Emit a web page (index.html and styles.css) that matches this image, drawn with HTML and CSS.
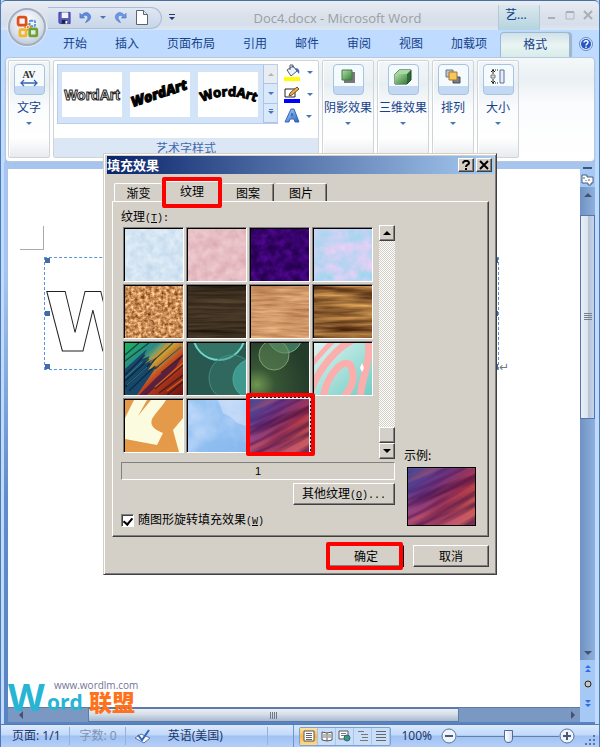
FILE: index.html
```html
<!DOCTYPE html>
<html lang="zh-CN">
<head>
<meta charset="utf-8">
<meta name="viewport" content="width=device-width">
<title>Doc4.docx - Microsoft Word</title>
<link rel="stylesheet" href="styles.css">
</head>
<body>
<svg class="defs" aria-hidden="true">
  <defs>
    <filter id="f-paper" x="0" y="0" width="1" height="1" color-interpolation-filters="sRGB"><feTurbulence type="fractalNoise" baseFrequency=".14" numOctaves="3" seed="3"/><feColorMatrix values="0 0 0 .2 .73  0 0 0 .13 .83  0 0 0 .06 .92  0 0 0 0 1"/></filter>
    <filter id="f-pink" x="0" y="0" width="1" height="1" color-interpolation-filters="sRGB"><feTurbulence type="fractalNoise" baseFrequency=".1" numOctaves="3" seed="8"/><feColorMatrix values="0 0 0 .12 .84  0 0 0 .2 .64  0 0 0 .18 .67  0 0 0 0 1"/></filter>
    <filter id="f-purple" x="0" y="0" width="1" height="1" color-interpolation-filters="sRGB"><feTurbulence type="fractalNoise" baseFrequency=".12" numOctaves="4" seed="5"/><feColorMatrix values="0 0 0 .3 .07  0 0 0 .06 -.02  0 0 0 .45 .2  0 0 0 0 1"/></filter>
    <filter id="f-bouquet" x="0" y="0" width="1" height="1" color-interpolation-filters="sRGB"><feTurbulence type="fractalNoise" baseFrequency=".07" numOctaves="4" seed="12"/><feColorMatrix values="0 0 0 .55 .5  0 0 0 -.05 .85  0 0 0 .06 .92  0 0 0 0 1"/></filter>
    <filter id="f-cork" x="0" y="0" width="1" height="1" color-interpolation-filters="sRGB"><feTurbulence type="fractalNoise" baseFrequency=".3" numOctaves="3" seed="2"/><feColorMatrix values="0 0 0 .9 .34  0 0 0 .9 .11  0 0 0 .8 -.05  0 0 0 0 1"/></filter>
    <filter id="f-walnut" x="0" y="0" width="1" height="1" color-interpolation-filters="sRGB"><feTurbulence type="fractalNoise" baseFrequency=".012 .25" numOctaves="4" seed="4"/><feColorMatrix values="0 0 0 .35 .07  0 0 0 .28 .05  0 0 0 .22 .02  0 0 0 0 1"/></filter>
    <filter id="f-oak" x="0" y="0" width="1" height="1" color-interpolation-filters="sRGB"><feTurbulence type="fractalNoise" baseFrequency=".03 .3" numOctaves="3" seed="9"/><feColorMatrix values="0 0 0 .35 .64  0 0 0 .38 .4  0 0 0 .35 .23  0 0 0 0 1"/></filter>
    <filter id="f-wood" x="0" y="0" width="1" height="1" color-interpolation-filters="sRGB"><feTurbulence type="fractalNoise" baseFrequency=".012 .16" numOctaves="4" seed="7"/><feColorMatrix values="0 0 0 1 .06  0 0 0 .85 -.05  0 0 0 .5 -.06  0 0 0 0 1"/></filter>
    <filter id="f-streak" x="0" y="0" width="1" height="1" color-interpolation-filters="sRGB"><feTurbulence type="fractalNoise" baseFrequency=".012 .13" numOctaves="3" seed="21"/><feColorMatrix values="0 0 0 0 .22  0 0 0 0 .03  0 0 0 0 .25  0 0 0 3 -1.25"/></filter>
    <filter id="f-glow" x="0" y="0" width="1" height="1" color-interpolation-filters="sRGB"><feTurbulence type="fractalNoise" baseFrequency=".012 .12" numOctaves="3" seed="33"/><feColorMatrix values="0 0 0 0 .9  0 0 0 0 .4  0 0 0 0 .32  0 0 0 2.4 -1.1"/></filter>
    <filter id="f-cloud" x="0" y="0" width="1" height="1" color-interpolation-filters="sRGB"><feTurbulence type="fractalNoise" baseFrequency=".035" numOctaves="4" seed="6"/><feColorMatrix values="0 0 0 0 .9  0 0 0 0 .93  0 0 0 0 1  0 0 0 2 -.7"/></filter>
    <linearGradient id="g-feather" x1="0" y1="0" x2="1" y2="1"><stop offset="0" stop-color="#19b45c"/><stop offset=".28" stop-color="#2c8a86"/><stop offset=".42" stop-color="#c8a93a"/><stop offset=".6" stop-color="#c2401c"/><stop offset="1" stop-color="#6b1210"/></linearGradient>
    <linearGradient id="g-dusk" x1="0" y1="0" x2="1" y2=".9"><stop offset="0" stop-color="#37489b"/><stop offset=".35" stop-color="#6d3583"/><stop offset=".62" stop-color="#a7344e"/><stop offset="1" stop-color="#d8643a"/></linearGradient>
    <linearGradient id="g-low" x1="0" y1="0" x2="0" y2="1"><stop offset=".4" stop-color="#c05a90" stop-opacity="0"/><stop offset="1" stop-color="#c05a90" stop-opacity=".55"/></linearGradient>
    <linearGradient id="g-sky" x1="0" y1="0" x2="1" y2="1"><stop offset="0" stop-color="#9cc7f4"/><stop offset="1" stop-color="#86b8ee"/></linearGradient>
    <linearGradient id="g-swirl" x1="0" y1="0" x2="1" y2="1"><stop offset="0" stop-color="#ddf3f0"/><stop offset="1" stop-color="#72cdc4"/></linearGradient>
    <radialGradient id="g-green" cx=".1" cy=".8" r=".9"><stop offset="0" stop-color="#6f9750"/><stop offset=".35" stop-color="#385535"/><stop offset="1" stop-color="#243c2a"/></radialGradient>
    <linearGradient id="g-blue" x1="0" y1="0" x2="1" y2="1"><stop offset="0" stop-color="#b9dbff"/><stop offset="1" stop-color="#245fc0"/></linearGradient>
    <linearGradient id="g-cube" x1="0" y1="0" x2="1" y2="1"><stop offset="0" stop-color="#b5e0aa"/><stop offset="1" stop-color="#347b38"/></linearGradient>
    <symbol id="dusk" viewBox="0 0 66 56" preserveAspectRatio="xMidYMid slice">
      <rect width="66" height="56" fill="url(#g-dusk)"/><rect width="66" height="56" fill="url(#g-low)"/>
      <g transform="rotate(-27 33 28)"><rect x="-20" y="-25" width="110" height="110" filter="url(#f-streak)" opacity=".55"/><rect x="-20" y="-25" width="110" height="110" filter="url(#f-glow)" opacity=".45"/></g>
    </symbol>
  </defs>
</svg>

<div class="window">
  <header class="titlebar">
    <button class="office" aria-label="Office">
      <svg viewBox="0 0 38 38"><g fill="none" stroke-width="3"><rect x="9" y="8" width="9" height="9" rx="2" stroke="#e0501c"/><rect x="11" y="22" width="7" height="7" rx="1" stroke="#f2b52c"/><rect x="22" y="21" width="8" height="8" rx="1" stroke="#6aa532"/></g><rect x="22" y="12" width="6" height="6" rx="1" fill="none" stroke="#4f93d6" stroke-width="2" stroke-dasharray="3 1"/><path d="M20 15v8M16 19h8" stroke="#e88a24" stroke-width="2" stroke-dasharray="2 1"/></svg>
    </button>
    <div class="quick">
      <button aria-label="保存"><svg width="14" height="14" viewBox="0 0 14 14"><path d="M1 1h12v12H2l-1-1z" fill="#5b62c4" stroke="#373b94"/><path d="M4 1h7v6H4z" fill="#f2f5ff"/><path d="M4 9h6v4H4z" fill="#20233f"/><path d="M8 10h2v3H8z" fill="#fff"/></svg></button>
      <button aria-label="撤消"><svg width="14" height="14" viewBox="0 0 14 14"><path d="M1 2v5h5L4.500 5.500C7 3 10 4 9.500 7.500L7 12c5-2 7-6 4.500-9S5 1 3 4z" fill="#5c8ede" stroke="#3d68b7" stroke-width=".6"/></svg></button>
      <i class="tri"></i>
      <button aria-label="恢复"><svg width="14" height="14" viewBox="0 0 14 14"><path d="M13 2v5H8l1.500-1.500C7 3 4 4 4.500 7.500L7 12C2 10 0 6 2.500 3S9 1 11 4z" fill="#6b9be6" stroke="#3d68b7" stroke-width=".6"/></svg></button>
      <button aria-label="新建"><svg width="12" height="15" viewBox="0 0 12 15"><path d="M.5.5h7l4 4v10H.5z" fill="#fff" stroke="#5a6472"/><path d="M7.500.5v4h4" fill="#e0e6ee" stroke="#5a6472"/></svg></button>
    </div>
    <button class="more" aria-label="自定义"><svg width="6" height="7" viewBox="0 0 6 7"><path d="M0 0h6v1H0zM0 3h6L3 6z" fill="#1f4077"/></svg></button>
    <h1>Doc4.docx - Microsoft Word</h1>
    <span class="context">艺...</span>
    <div class="winbtns">
      <button aria-label="最小化"><svg width="10" height="10"><path d="M1 7h7v2H1z" fill="#aaaeb5"/></svg></button>
      <button aria-label="最大化"><svg width="10" height="10"><path d="M1 2h8v7H1z" fill="none" stroke="#b2b6bc"/><path d="M1 1h8v2H1z" fill="#aaaeb5"/></svg></button>
      <button aria-label="关闭"><svg width="10" height="10"><path d="M1 1l8 8M9 1L1 9" stroke="#aaaeb5" stroke-width="2"/></svg></button>
    </div>
  </header>

  <nav class="tabs">
    <button>开始</button><button>插入</button><button>页面布局</button><button>引用</button><button>邮件</button><button>审阅</button><button>视图</button><button>加载项</button><button class="on">格式</button>
    <button class="help" aria-label="帮助"><svg width="14" height="14" viewBox="0 0 14 14"><circle cx="7" cy="7" r="6.500" fill="#dce9fb" stroke="#6b8bc0"/><circle cx="7" cy="7" r="5" fill="#2557c4"/><path d="M5 5.500C5 3.200 9 3.300 9 5.500 9 7 7 6.800 7 8.500M7 9.500v1.500" fill="none" stroke="#fff" stroke-width="1.400"/></svg></button>
  </nav>

  <section class="ribbon">
    <div class="group">
      <button class="big"><span class="icon"><svg width="18" height="20" viewBox="0 0 18 20"><text class="av" x="9" y="9" text-anchor="middle">AV</text><path d="M1 14h16M4 11l-3 3 3 3M14 11l3 3-3 3" fill="none" stroke="#3a64b4" stroke-width="1.300"/></svg></span>文字<i class="tri"></i></button>
    </div>
    <div class="group styles">
      <div class="stylebody">
        <div class="gallery">
          <svg class="art" viewBox="0 0 60 45"><text class="art-outline" x="30" y="28" text-anchor="middle">WordArt</text></svg>
          <svg class="art" viewBox="0 0 60 45"><path id="slope" d="M3 35L64 15" fill="none"/><text class="art-slant"><textPath href="#slope">WordArt</textPath></text></svg>
          <svg class="art" viewBox="0 0 60 45"><path id="arch" d="M4 30Q30 18 60 31" fill="none"/><text class="art-arch"><textPath href="#arch">WordArt</textPath></text></svg>
          <div class="spin"><button aria-label="上一行" disabled><i class="tri up"></i></button><button aria-label="下一行"><i class="tri"></i></button><button aria-label="更多"><i class="tri line"></i></button></div>
        </div>
        <div class="tools">
          <button aria-label="形状填充"><svg width="17" height="17" viewBox="0 0 17 17"><path d="M3 6l6-4 4 5-6 5z" fill="#eef3fa" stroke="#4c5b74"/><path d="M6 6V1h3v3" fill="none" stroke="#4c5b74"/><path d="M11 4c4 0 5 3 4 6l-3-4z" fill="#3d6cb4"/><path d="M0 13h16v4H0z" fill="#ff0"/></svg><i class="tri"></i></button>
          <button aria-label="形状轮廓"><svg width="17" height="17" viewBox="0 0 17 17"><path d="M1 3h10v8H1z" fill="#fff" stroke="#222"/><path d="M5 10l1-3 7-6 2 2-7 6z" fill="#e9b052" stroke="#76502a"/><path d="M0 13h16v4H0z" fill="#00f"/></svg><i class="tri"></i></button>
          <button aria-label="更改形状"><svg width="16" height="16" viewBox="0 0 16 16"><path d="M1 14L7 1h3l5 13h-4l-1-3H6l-1 3zM7 8h2L8 5z" fill="url(#g-blue)" stroke="#3567b7"/></svg><i class="tri"></i></button>
        </div>
      </div>
      <div class="caption">艺术字样式</div>
    </div>
    <div class="group">
      <button class="big"><span class="icon"><svg width="14" height="14"><path d="M3 3h11v11H3z" fill="#333" opacity=".65"/><path d="M1 1h10v10H1z" fill="url(#g-cube)" stroke="#477a45"/></svg></span>阴影效果<i class="tri"></i></button>
    </div>
    <div class="group">
      <button class="big"><span class="icon"><svg width="18" height="16" viewBox="0 0 18 16"><path d="M1 5l4-4h12v10l-4 4H1z" fill="#2e6a34" stroke="#1d4722"/><path d="M1 5l4-4h12l-4 4z" fill="#a9d9a2"/><path d="M1 5h12v10H1z" fill="url(#g-cube)"/></svg></span>三维效果<i class="tri"></i></button>
    </div>
    <div class="group">
      <button class="big"><span class="icon"><svg width="16" height="16"><path d="M1 1h7v7H1z" fill="#bdc4cf" stroke="#6a7482"/><path d="M8 8h7v6H8z" fill="#747e90" stroke="#414b5b"/><path d="M4 3h8v8H4z" fill="#f6c75c" stroke="#a5752b"/></svg></span>排列<i class="tri"></i></button>
    </div>
    <div class="group">
      <button class="big"><span class="icon"><svg width="16" height="16"><path d="M3 1h6M3 14h6" stroke="#222" stroke-dasharray="1 1"/><path d="M3 0v5M1 3l2-2 2 2M3 10v5M1 12l2 2 2-2" fill="none" stroke="#222"/><path d="M1 6h4v3H1z" fill="#ddd" stroke="#777"/><path d="M10 1h4v13h-4z" fill="#e7eefb" stroke="#5d7199"/></svg></span>大小<i class="tri"></i></button>
    </div>
  </section>

  <main class="work">
    <div class="page">
      <div class="corner"></div>
      <div class="selection">
        <svg class="shape" height="112"><text x="-2" y="93">w</text></svg>
        <i class="grip tl"></i><i class="grip ml"></i><i class="grip bl"></i><i class="grip tr"></i><i class="grip mr"></i><i class="grip br"></i>
        <span class="mark">↵</span>
      </div>
      <div class="watermark"><small>www.wordlm.com</small><b class="cap">W</b><b class="ord">ord</b><b class="cn">联盟</b></div>
    </div>
    <div class="vbar">
      <i class="split"></i>
      <button aria-label="标尺"><svg width="13" height="12" viewBox="0 0 13 12"><path d="M1 1h5v2h6v6h-2v2H7V9H1z" fill="#fff" stroke="#4d5c80"/><path d="M3 3v2M8 5v2M5 6v1" stroke="#4d5c80"/></svg></button>
      <div class="vtrack"><button aria-label="向上"><i class="tri dark up"></i></button><div class="vthumb"></div><div class="vrest"></div><button aria-label="向下"><i class="tri dark"></i></button></div>
      <div class="browse"><svg width="10" height="44" viewBox="0 0 10 44"><path d="M5 0l3 3H2zM5 4l3 3H2zM5 42l3-3H2zM5 38l3-3H2z" fill="#2f6bea"/><circle cx="5" cy="19" r="3" fill="#c9c8ba" stroke="#222"/></svg></div>
    </div>
    <div class="hbar"><button aria-label="向左"><i class="tri dark left"></i></button><div class="hthumb"></div><button aria-label="向右"><i class="tri dark right"></i></button></div>
  </main>

  <footer class="status">
    <span class="cell">页面: 1/1</span><span class="cell dim">字数: 0</span>
    <span class="cell lang"><svg width="17" height="15" viewBox="0 0 17 15"><path d="M1 9l6-4 9 4-6 5z" fill="#f5f7fb" stroke="#667694"/><path d="M4 6l4 5 7-10" fill="none" stroke="#3267be" stroke-width="2"/></svg>英语(美国)</span>
    <span class="gap"></span>
    <div class="views">
      <button class="on" aria-label="页面视图"><svg width="12" height="12"><path d="M1 1h10v10H1z" fill="#fff" stroke="#555"/><path d="M3 3.500h6M3 5.500h6M3 7.500h6M3 9.500h6" stroke="#666"/></svg></button>
      <button aria-label="阅读"><svg width="12" height="12"><path d="M1 2l5 1 5-1v8l-5 1-5-1zM6 3v8" fill="#fff" stroke="#555"/><path d="M2 5h3M2 7h3M7 5h3M7 7h3" stroke="#777"/></svg></button>
      <button aria-label="Web"><svg width="13" height="12"><path d="M1 1h9v8H1z" fill="#fff" stroke="#555"/><path d="M3 3.500h5M3 5.500h5" stroke="#777"/><circle cx="9" cy="8" r="3" fill="#3c9d63" stroke="#2c5eb2"/></svg></button>
      <button aria-label="大纲"><svg width="12" height="12"><path d="M1 1.500h6M4 4.500h7M5 7.500h6M3 10.500h8" stroke="#777"/></svg></button>
      <button aria-label="草稿"><svg width="12" height="12"><path d="M1 1.500h10M1 4.500h10M1 7.500h10M1 10.500h10" stroke="#666"/></svg></button>
    </div>
    <span class="pct">100%</span>
    <button class="round" aria-label="缩小"><svg width="16" height="16"><circle cx="8" cy="8" r="7" fill="#eef4fd" stroke="#5b7396"/><path d="M4 7h8v2H4z" fill="#4a5a76"/></svg></button>
    <input class="zoom" type="range" min="0" max="100" value="50" aria-label="显示比例">
    <button class="round" aria-label="放大"><svg width="16" height="16"><circle cx="8" cy="8" r="7" fill="#eef4fd" stroke="#5b7396"/><path d="M4 7h3V4h2v3h3v2H9v3H7V9H4z" fill="#4a5a76"/></svg></button>
    <svg class="resize" width="12" height="12"><path d="M9 1h2v2H9zM5 5h2v2H5zM9 5h2v2H9zM1 9h2v2H1zM5 9h2v2H5zM9 9h2v2H9z" fill="#5477ae"/></svg>
  </footer>
</div>

<div class="dialog" role="dialog" aria-labelledby="dlg-title">
  <div class="dlg-title"><h2 id="dlg-title">填充效果</h2>
    <button aria-label="帮助"><svg width="10" height="10"><path d="M2 3.500C2 0 8 0 8 3 8 5 5 4.500 5 7M5 8v2" fill="none" stroke="#000" stroke-width="2"/></svg></button><button aria-label="关闭"><svg width="10" height="10"><path d="M1 1l8 8M9 1L1 9" stroke="#000" stroke-width="2"/></svg></button>
  </div>
  <div class="dlg-tabs" role="tablist"><button role="tab">渐变</button><button role="tab" class="on" aria-selected="true">纹理</button><button role="tab">图案</button><button role="tab">图片</button></div>
  <div class="panel">
    <div class="left">
      <div class="lbl">纹理<span class="key">(<u>T</u>):</span></div>
      <div class="picker">
        <div class="swatches">
          <button aria-label="新闻纸"><svg viewBox="0 0 58 52"><rect width="58" height="52" filter="url(#f-paper)"/></svg></button>
          <button aria-label="粉色"><svg viewBox="0 0 58 52"><rect width="58" height="52" filter="url(#f-pink)"/></svg></button>
          <button aria-label="紫色"><svg viewBox="0 0 58 52"><rect width="58" height="52" filter="url(#f-purple)"/></svg></button>
          <button aria-label="花束"><svg viewBox="0 0 58 52"><rect width="58" height="52" filter="url(#f-bouquet)"/></svg></button>
          <button aria-label="软木塞"><svg viewBox="0 0 58 52"><rect width="58" height="52" filter="url(#f-cork)"/></svg></button>
          <button aria-label="胡桃"><svg viewBox="0 0 58 52"><rect width="58" height="52" filter="url(#f-walnut)"/></svg></button>
          <button aria-label="栎木"><svg viewBox="0 0 58 52"><rect width="58" height="52" filter="url(#f-oak)"/></svg></button>
          <button aria-label="深色木质"><svg viewBox="0 0 58 52"><rect width="58" height="52" filter="url(#f-wood)"/></svg></button>
          <button aria-label="羽毛"><svg viewBox="0 0 58 52"><rect width="58" height="52" fill="url(#g-feather)"/><path d="M0 26L22 6l-5 10 8-3-6 8 13-7-9 13 9-4L12 52H0z" fill="#17486b"/><path d="M14 52L32 34l26-22-7 12-14 14-15 14z" fill="#31164f" opacity=".7"/><path d="M0 12L14 0M0 18L24 0M0 32l20-20M0 38l24-22M0 44l27-25M4 48l26-25M26 20L48 0M30 26L56 4M36 30L58 12M30 46l28-24M34 50l24-18M42 52l16-13" stroke="#0c1626" stroke-width="1.400" opacity=".6"/><path d="M0 35l17-16M2 42l20-18M25 15L38 0M34 24L58 2" stroke="#4fc4b0" opacity=".5"/><path d="M25 20L43 0M30 44L58 20M42 48l16-12" stroke="#ee7c28" stroke-width="1.500" opacity=".6"/></svg></button>
          <button aria-label="青色光圈"><svg viewBox="0 0 58 52"><rect width="58" height="52" fill="#28584f"/><circle cx="31" cy="-9" r="26" fill="#347467" stroke="#6fd6ca" stroke-width="2"/><circle cx="44" cy="35" r="23" fill="#3c8176" fill-opacity=".4" stroke="#438c80"/><circle cx="65" cy="36" r="20" fill="#46a99f" fill-opacity=".75" stroke="#4da99d"/></svg></button>
          <button aria-label="绿色光圈"><svg viewBox="0 0 58 52"><rect width="58" height="52" fill="url(#g-green)"/><circle cx="34" cy="-7" r="17" fill="#417559" stroke="#76b191"/><circle cx="23" cy="12" r="15" fill="#5f8758" fill-opacity=".55" stroke="#7aa070"/></svg></button>
          <button aria-label="彩色漩涡"><svg viewBox="0 0 58 52"><rect width="58" height="52" fill="url(#g-swirl)"/><g fill="none" stroke="#fbaeac" stroke-width="7"><path d="M9 56C12 30 34 10 38 26S34 48 27 58"/><path d="M-4 49C5 24 25 3 39-3M54-3C58 18 46 38 46 58" /><path d="M-4 24C3 14 10 7 20-3" stroke-width="5"/></g><path d="M48 20l2 5-2 4-2-4z" fill="#fff"/></svg></button>
          <button aria-label="橙色图形"><svg viewBox="0 0 58 52"><rect width="58" height="52" fill="#e49a48"/><path d="M9 0h13l-9 16L26 0h15c-4 7-10 12-14 19-2 6 1 10 11 14l-6 12L0 39V18zM58 18L48 30l6 22h4z" fill="#fbfbdf"/></svg></button>
          <button aria-label="天空"><svg viewBox="0 0 58 52"><rect width="58" height="52" fill="url(#g-sky)"/><rect width="58" height="52" filter="url(#f-cloud)" opacity=".5"/><path d="M30 0h28v26l-9-3-6-6-8-4z" fill="#e0e8fa" opacity=".5"/></svg></button>
          <button class="picked" aria-label="纹理 1"><svg viewBox="0 0 58 52"><use href="#dusk" width="58" height="52"/></svg></button>
        </div>
        <div class="scroll"><button aria-label="向上"><i class="tri black up"></i></button><div class="dither"></div><span class="knob"></span><button aria-label="向下"><i class="tri black"></i></button></div>
      </div>
      <output class="count">1</output>
      <button class="btn other"><span>其他纹理<span class="key">(<u>O</u>)...</span></span></button>
      <label class="check"><input type="checkbox" checked><span>随图形旋转填充效果<span class="key">(<u>W</u>)</span></span></label>
    </div>
    <div class="sample"><span>示例:</span><svg viewBox="0 0 66 56"><use href="#dusk" width="66" height="56"/></svg></div>
  </div>
  <div class="actions"><button class="btn ok">确定</button><button class="btn">取消</button></div>
</div>
</body>
</html>
```
FILE: styles.css
```css
* { box-sizing: border-box; }
body {
  margin: 0;
  position: relative;
  font: 12px/16px "Noto Sans", "Noto Sans CJK SC", sans-serif;
  color: #15428b;
}
button { font: inherit; color: inherit; border: 0; padding: 0; margin: 0; background: none; display: flex; align-items: center; justify-content: center; }
svg { display: block; }
h1, h2 { margin: 0; font-size: 12px; }
.defs { position: absolute; width: 0; height: 0; }

.window { min-height: 100vh; display: flex; flex-direction: column; background: #bfdbff; border-left: 1px solid #4d79b5; border-right: 1px solid #4d79b5; }

/* small triangles */
.tri { border: 3px solid transparent; border-top-color: #4a76b5; border-bottom: 0; }
.tri.up { border-top: 0; border-bottom: 3px solid #b0b5bd; }
.tri.line { box-shadow: 0 -3px 0 -1px #4a76b5; }
.tri.dark { border-width: 4px; border-bottom-width: 0; border-top-color: #44516f; }
.tri.dark.up { border-width: 0 4px 4px; border-bottom-color: #44516f; }
.tri.dark.left { border: 4px solid transparent; border-left: 0; border-right-color: #44516f; }
.tri.dark.right { border: 4px solid transparent; border-right: 0; border-left-color: #44516f; }
.tri.black { border-width: 4px; border-bottom-width: 0; border-top-color: #000; }
.tri.black.up { border-width: 0 4px 4px; border-bottom-color: #000; }

/* title bar */
.titlebar { height: 30px; display: flex; align-items: center; position: relative; padding: 4px 6px 0 47px; border-top: 1px solid #4d6f9f; background: linear-gradient(#e9edf4, #dbe1ea 50%, #d5dfeb 80%, #dde7f2); border-radius: 5px 5px 0 0; }
.office { position: absolute; left: 7px; top: 7px; z-index: 2; width: 38px; height: 38px; border-radius: 50%; border: 2px solid #a3aec0; background: radial-gradient(circle at 50% 35%, #fff, #dce2eb 55%, #a9b8cc); box-shadow: 0 0 0 1px #e3eaf4; }
.office svg { width: 36px; height: 36px; }
.quick { height: 22px; display: flex; align-items: center; gap: 8px; padding: 0 13px 0 10px; border: 1px solid #a9bcd8; border-left: 0; border-radius: 0 11px 11px 0; background: linear-gradient(#dfe7f2, #c8d6e9); }
.quick button { width: 13px; }
.more { margin-left: 7px; }
h1 { flex: 1; text-align: center; font: 13px/20px "Open Sans", "Noto Sans CJK SC", sans-serif; color: #9b9ea4; white-space: nowrap; padding-left: 2px; }
.context { align-self: stretch; width: 42px; padding: 2px 6px; border: 1px solid #b4c8d5; border-width: 0 1px; background: linear-gradient(#dce8ee, #b4d4df); }
.winbtns { display: flex; gap: 8px; margin-left: 7px; padding-bottom: 6px; }

/* ribbon tabs */
.tabs { height: 27px; display: flex; align-items: stretch; padding-left: 48px; }
.tabs button { padding: 0 14px; white-space: nowrap; }
.tabs .on { padding: 0 22px; border: 1px solid #9bb9d6; border-bottom: 0; border-radius: 4px 4px 0 0; background: linear-gradient(#cfe2e8, #eaf4f3 50%, #d7ece9); margin: 2px 0 0 -1px; box-shadow: 2px 0 1px #9db5c8; }
.tabs .help { margin-left: auto; padding: 0 6px 0 0; }

/* ribbon */
.ribbon { margin: 0 4px 0 4px; height: 105px; display: flex; gap: 3px; padding: 2px 2px 3px; background: linear-gradient(#f4f8fa, #e9f0f3 20%, #fbfcfd 45%, #fff); border: 1px solid #b5c8dd; border-radius: 4px; box-shadow: 0 1px 1px #7f9dc5; }
.group { border: 1px solid #cfd4d8; border-radius: 2px; padding: 3px 4px; min-width: 42px; background: linear-gradient(#f3f6f8, #e8eff3 25%, #fbfcfd 50%, #fff 80%, #e8ebee); box-shadow: inset 1px 1px #fff; }
.big { flex-direction: column; width: 100%; gap: 4px; white-space: nowrap; }
.group > .big { min-width: 32px; }
.group:nth-child(n+3):nth-child(-n+4) { padding: 3px 1px; }
.icon { width: 31px; height: 31px; display: flex; justify-content: center; padding-top: 4px; border: 1px solid #a8c2e2; border-radius: 4px; background: linear-gradient(#f5fafd 73%, #c3d9f3 74%); margin-bottom: 1px; }
.big .tri { margin-top: 2px; }
.av { font: bold 10px "Liberation Serif", serif; fill: #333; }
.styles { padding: 3px 0 0; display: flex; flex-direction: column; justify-content: space-between; background: #fff; }
.stylebody { display: flex; gap: 6px; padding: 0 5px 0 3px; }
.gallery { display: flex; gap: 8px; align-items: center; height: 60px; padding-left: 4px; background: #d3e4f8; border: 1px solid #b7cfec; }
.art { width: 60px; height: 45px; background: #fff; }
.art .art-outline { font: bold 14px "Liberation Sans", sans-serif; fill: #fff; stroke: #222; stroke-width: 1; }
.art .art-slant { font: italic 800 14px "Open Sans", sans-serif; stroke: #000; }
.art .art-arch { font: bold 13px "Open Sans", sans-serif; stroke: #000; stroke-width: 1; }
.spin { align-self: stretch; width: 14px; display: grid; grid-template-rows: 1fr 1fr 1fr; margin-left: -3px; }
.spin button { border: 1px solid #aac5e6; background: #d9e8fb; border-width: 0 0 1px 1px; }
.spin button:disabled { background: #e9edf1; }
.tools { display: flex; flex-direction: column; gap: 5px; }
.tools button { gap: 6px; justify-content: flex-start; }
.caption { height: 19px; text-align: center; line-height: 22px; background: #dce7f6; color: #4068ad; }

/* document */
.work { flex: 1; margin: 0 4px 0 3px; display: grid; grid-template: 1fr 15px / 1fr 15px; padding: 7px 0 2px 4px; background: linear-gradient(#a6c4ee, #a6c4ee 20%, #5f8ccd 60%, #5984c3); }
.page { background: #fff; position: relative; padding: 57px 81px 0 12px; }
.corner { width: 24px; height: 24px; border: 1px solid #aaa; border-width: 0 1px 1px 0; }
.selection { position: relative; height: 113px; margin: 7px 0 0 24px; border: 1px dashed #5b94dd; }
.shape { width: 100%; overflow: hidden; }
.shape text { font: bold 108px "DejaVu Sans", sans-serif; fill: #fff; stroke: #222; }
.grip { position: absolute; width: 5px; height: 5px; background: #426da5; }
.tl, .ml, .bl { left: 0; }
.tr, .mr, .br { right: 0; }
.tl, .tr { top: 0; }
.ml, .mr { top: 53px; }
.bl, .br { bottom: 0; }
.mark { position: absolute; right: -11px; bottom: -6px; font: 12px/16px "DejaVu Sans", sans-serif; color: #777; }
.watermark { position: absolute; left: 0; bottom: -5px; z-index: 2; display: grid; grid-template-columns: auto auto auto; justify-content: start; align-items: end; color: #27b5d3; }
.watermark small { grid-area: 1 / 1 / 2 / 4; font: 10px/10px "Open Sans", sans-serif; color: #737396; padding-left: 46px; }
.watermark b { font: bold 21px/20px "Open Sans", sans-serif; }
.watermark .cap { font-size: 38px; margin-top: -12px; line-height: 32px; }
.watermark .ord { margin-left: -1px; }
.watermark .cn { font: 900 23px/22px "Noto Sans CJK SC", sans-serif; color: #ff711b; padding-left: 3px; }

.vbar { grid-row: 1 / 3; grid-column: 2; display: flex; flex-direction: column; align-items: stretch; background: #a6c8f5; }
.split { height: 2px; background: #3c5683; margin: -2px 3px 3px; }
.vbar > button { height: 15px; }
.vtrack { flex: 1; display: flex; flex-direction: column; background: linear-gradient(90deg, #6f92c4, #8eb0dc); }
.vtrack button { height: 15px; }
.vtrack button:first-child { height: 28px; align-items: flex-start; padding-top: 6px; }
.vthumb { flex: 203; border: 1px solid #5475b0; background: repeating-linear-gradient(#767f90 0 1px, transparent 1px 2px) center / 8px 8px no-repeat, linear-gradient(90deg, #e9eff5, #dbe3ed 50%, #b4c3d9 55%, #c9d5e5); }
.vrest { flex: 228; }
.browse { height: 62px; padding-top: 5px; display: flex; justify-content: center; }
.hbar { display: flex; background: #7a98c2; border-top: 1px solid #5d7aac; }
.hbar button { width: 15px; }
.hthumb { flex: 1; margin: 0 106px 0 65px; border: 1px solid #597ca9; background: repeating-linear-gradient(90deg, #6d7889 0 1px, transparent 1px 2px) center / 8px 7px no-repeat, linear-gradient(#ebeff4, #d4dde8 45%, #a9b9cf); }

/* status bar */
.status { height: 23px; display: flex; align-items: center; color: #1b3768; background: linear-gradient(#dbe9fc, #c2dafb 45%, #a1c1f2 50%, #b4cff8); border-top: 1px solid #567db1; padding-left: 1px; white-space: nowrap; }
.cell { display: flex; align-items: center; height: 18px; padding: 0 8px 0 10px; border-right: 1px solid #91b2df; }
.dim { color: #7f92ae; }
.lang { gap: 17px; padding: 0 44px 0 8px; }
.gap { flex: 1; border-right: 1px solid #6f96cc; height: 22px; }
.views { display: flex; margin-left: 5px; border: 1px solid #7f9fd0; border-radius: 2px; background: #c9def9; }
.views button { width: 18px; height: 17px; border-right: 1px solid #aac5ea; }
.views .on { background: linear-gradient(#fee3a4, #f9b64c 50%, #fddc8a); }
.pct { margin: 0 9px 0 10px; }
.zoom { appearance: none; margin: 0; width: 102px; height: 18px; background: linear-gradient(#6380ab, #6380ab) center / 100% 1px no-repeat; }
.zoom::-webkit-slider-thumb { appearance: none; width: 9px; height: 13px; border: 1px solid #536b93; background: linear-gradient(90deg, #fff, #d0def1); border-radius: 1px 1px 5px 5px; }
.resize { margin: 7px 3px 0 9px; }

/* dialog */
.dialog { position: absolute; top: 153px; left: 0; right: 0; width: 394px; margin: 0 auto; padding: 2px; z-index: 5; color: #000; font-family: "Noto Sans CJK SC", sans-serif; background: #d4d0c8; border: 1px solid #d4d0c8; border-right-color: #404040; border-bottom-color: #404040; box-shadow: inset 1px 1px #fff, inset -1px -1px #808080; }
.dlg-title { display: flex; align-items: center; height: 18px; padding: 0 2px 0 0; gap: 2px; color: #fff; background: linear-gradient(90deg, #0a246a, #a6caf0); margin-left: 1px; }
.dlg-title h2 { flex: 1; font-weight: bold; font-size: 13px; }
.dlg-title button, .scroll button, .knob { width: 16px; height: 14px; background: #d4d0c8; border: 1px solid #fff; border-right-color: #404040; border-bottom-color: #404040; box-shadow: inset -1px -1px #808080; }
.dlg-tabs { display: flex; align-items: flex-end; padding: 8px 0 0 8px; height: 27px; gap: 1px; }
.dlg-tabs button { width: 52px; height: 18px; border: 1px solid #fff; border-bottom: 0; border-right: 1px solid #404040; border-radius: 2px 2px 0 0; box-shadow: inset -1px 0 #808080; }
.dlg-tabs button:nth-child(n+3) { border-left-color: #d4d0c8; }
.dlg-tabs button:first-child { width: 48px; box-shadow: none; border-right: 0; }
.dlg-tabs .on { position: relative; z-index: 1; width: 58px; height: 21px; padding-bottom: 2px; margin-bottom: -1px; background: #d4d0c8; }
.dlg-tabs .on::after, .picked::after, .ok::after { content: ""; position: absolute; inset: -5px -2px -6px; border: 4px solid #f00; border-radius: 2px; }
.panel { margin: 0 5px 0 6px; padding: 6px 8px 8px; display: flex; gap: 9px; border: 1px solid #fff; border-right-color: #404040; border-bottom-color: #404040; box-shadow: inset -1px -1px #808080; }
.left { width: 274px; }
.lbl { height: 17px; }
.key { font: 10px/16px "Liberation Mono", monospace; }
.picker { display: flex; justify-content: space-between; }
.swatches { display: grid; grid-template-columns: repeat(4, 61px); grid-auto-rows: 55px; gap: 2px; padding: 2px 2px 6px; }
.swatches button { position: relative; border: 1px solid #808080; border-right-color: #fff; border-bottom-color: #fff; box-shadow: inset 1px 1px #000; padding: 1px 0 0 1px; }
.swatches button svg { width: 100%; height: 100%; }
.swatches .picked { border: 1px solid #fff; padding: 0; box-shadow: none; outline: 2px dotted #000; }
.swatches .picked::after { inset: -6px -6px -4px -4px; }
.scroll { width: 16px; display: flex; flex-direction: column; }
.scroll button, .knob { width: 16px; height: 16px; }
.dither { flex: 1; background: repeating-conic-gradient(#fff 0 25%, #d4d0c8 0 50%) 0 0 / 2px 2px; }
.count { display: block; height: 18px; margin-top: 3px; text-align: center; border: 1px solid #808080; border-right-color: #fff; border-bottom-color: #fff; font: 11px/17px "Liberation Sans", sans-serif; }
.btn { width: 76px; height: 22px; border: 1px solid #fff; border-right-color: #404040; border-bottom-color: #404040; box-shadow: inset -1px -1px #808080; }
.other { width: 102px; margin: 3px 0 0 auto; }
.check { display: flex; align-items: center; height: 16px; margin-top: 7px; }
.check input { appearance: none; width: 13px; height: 13px; margin: 0 4px 0 0; border: 1px solid #808080; border-right-color: #fff; border-bottom-color: #fff; background: #fff; box-shadow: inset 1px 1px #404040; position: relative; }
.check input:checked::after { content: ""; position: absolute; left: 3px; top: 1px; width: 4px; height: 7px; border: solid #000; border-width: 0 2px 2px 0; transform: rotate(40deg); }
.sample { flex: 1; display: flex; flex-direction: column; justify-content: flex-end; gap: 4px; padding-bottom: 2px; }
.sample svg { width: 69px; height: 59px; margin-left: 3px; border: 1px solid #000; }
.actions { display: flex; justify-content: flex-end; gap: 9px; padding: 8px 5px 5px 0; }
.ok { position: relative; border-color: #fff #000 #000 #fff; }
.ok::after { inset: -4px 0 -4px -3px; }
```
